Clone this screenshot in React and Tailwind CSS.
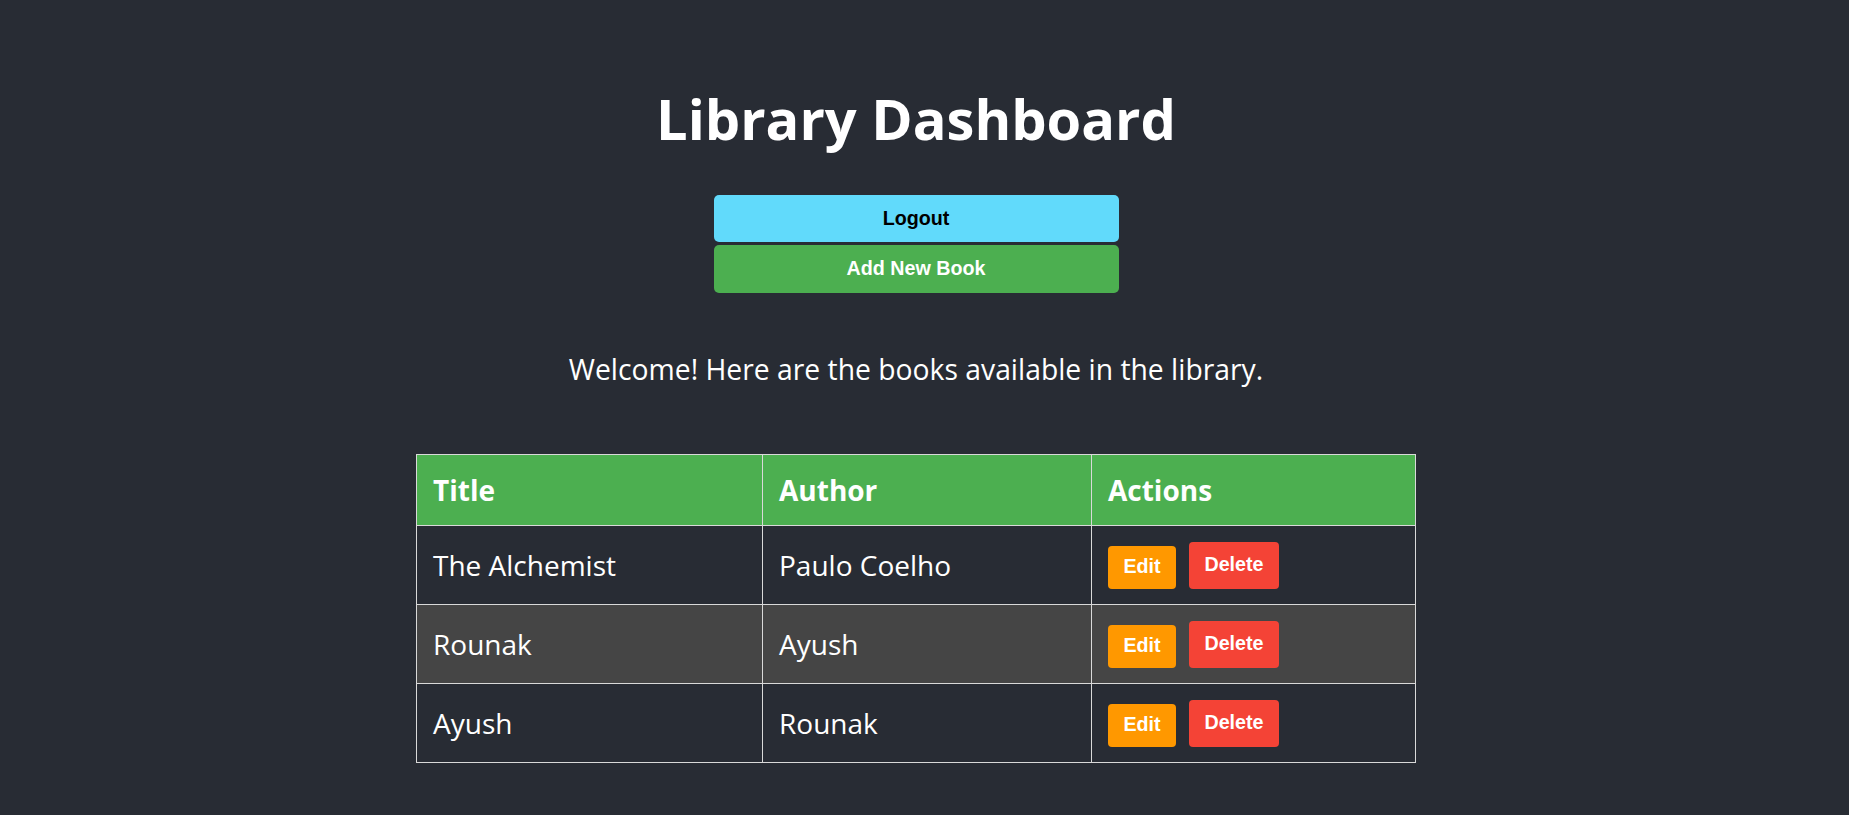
import React, { useState } from 'react';

const initialBooks = [
  { id: 1, title: 'The Alchemist', author: 'Paulo Coelho' },
  { id: 2, title: 'Rounak', author: 'Ayush' },
  { id: 3, title: 'Ayush', author: 'Rounak' },
];

const App = () => {
  const [books] = useState(initialBooks);

  return (
    <div className="min-h-[815px] bg-[#282c34] text-white font-['Open_Sans',sans-serif] pr-[17px] pt-[84px] pb-[53px] flex flex-col items-center">
      <h1 className="text-[56px] leading-[68px] font-bold">Library Dashboard</h1>

      <div className="mt-[43px] flex flex-col gap-[3px] w-[405px] font-['Liberation_Sans',Arial,sans-serif]">
        <button className="h-[47px] rounded-[5px] bg-[#61dafb] text-black text-[19.7px] font-bold">
          Logout
        </button>
        <button className="h-[48px] rounded-[5px] bg-[#4caf50] text-white text-[19.7px] font-bold">
          Add New Book
        </button>
      </div>

      <p className="mt-[57px] text-[28.3px] leading-[38px]">
        Welcome! Here are the books available in the library.
      </p>

      {/* books table */}
      <table className="mt-[66px] w-[1000px] border-collapse text-[28px]">
        <thead>
          <tr className="bg-[#4caf50]">
            <th className="w-[346px] h-[71px] border border-[#d9d9d9] px-[16px] text-left font-bold">Title</th>
            <th className="w-[329px] h-[71px] border border-[#d9d9d9] px-[16px] text-left font-bold">Author</th>
            <th className="h-[71px] border border-[#d9d9d9] px-[16px] text-left font-bold">Actions</th>
          </tr>
        </thead>
        <tbody>
          {books.map((book, i) => (
            <tr key={book.id} className={i % 2 === 1 ? 'bg-[#454545]' : ''}>
              <td className="h-[79px] border border-[#d9d9d9] px-[16px]">{book.title}</td>
              <td className="h-[79px] border border-[#d9d9d9] px-[16px]">{book.author}</td>
              <td className="h-[79px] border border-[#d9d9d9] px-[16px]">
                <div className="flex items-end gap-[13px] font-['Liberation_Sans',Arial,sans-serif] text-[19.7px] font-bold">
                  <button className="w-[68px] h-[43px] rounded-[4px] bg-[#ff9800] text-white">Edit</button>
                  <button className="w-[90px] h-[47px] rounded-[4px] bg-[#f44336] text-white">Delete</button>
                </div>
              </td>
            </tr>
          ))}
        </tbody>
      </table>
    </div>
  );
};

export default App;
